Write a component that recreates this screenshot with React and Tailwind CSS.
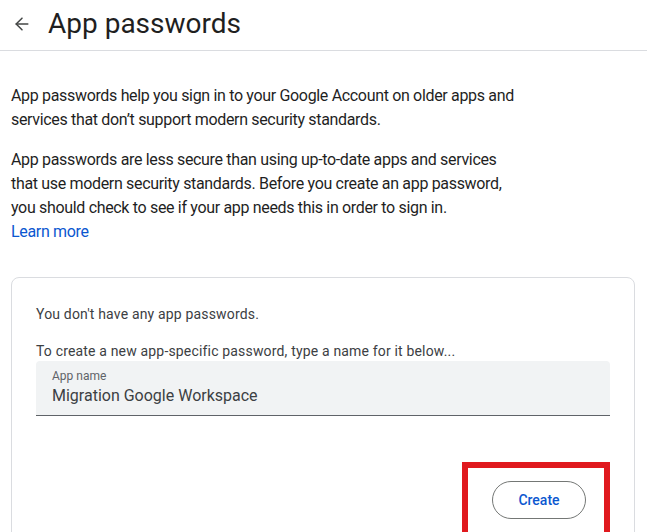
import { ArrowLeft } from 'lucide-react';

export default function App() {
  return (
    <div className="relative h-[532px] w-[647px] overflow-hidden bg-white font-['Roboto',sans-serif] text-[#1f1f1f]">
      {/* Header */}
      <div className="flex h-[51px] items-center border-b border-[#dadce0] pb-[3px]">
        <button className="ml-[10px] flex h-6 w-6 items-center justify-center text-[#444746]">
          <ArrowLeft className="h-5 w-5" strokeWidth={1.8} />
        </button>
        <h1 className="ml-[14px] text-[28px] leading-9 font-normal text-[#1f1f1f]">App passwords</h1>
      </div>

      {/* Intro */}
      <div className="px-[11px] pt-[33px] text-base leading-6 tracking-[-0.33px] text-[#1f1f1f]">
        <p>
          App passwords help you sign in to your Google Account on older apps and
          <br />
          services that don’t support modern security standards.
        </p>
        <p className="mt-4">
          App passwords are less secure than using up-to-date apps and services
          <br />
          that use modern security standards. Before you create an app password,
          <br />
          you should check to see if your app needs this in order to sign in.
        </p>
        <a href="#" className="block text-[#0b57d0]">Learn more</a>
      </div>

      {/* Card */}
      <div className="mx-[11px] mt-[33px] h-[300px] w-[624px] rounded-lg border border-[#dadce0] px-6 pt-[26px]">
        <p className="text-sm leading-5 tracking-[0.17px] text-[#3c4043]">You don't have any app passwords.</p>
        <p className="mt-[17px] text-sm leading-5 tracking-[0.17px] text-[#3c4043]">
          To create a new app-specific password, type a name for it below...
        </p>
        <div className="mt-0 h-[55px] w-[574px] rounded-t border-b border-[#5f6368] bg-[#f1f3f4] px-4 pt-[7px]">
          <div className="text-xs leading-4 text-[#5f6368]">App name</div>
          <div className="text-base leading-6 text-[#3c4043]">Migration Google Workspace</div>
        </div>
        <div className="mt-[65px] flex justify-end pr-[24px]">
          <button className="h-[38px] w-[94px] rounded-full border border-[#747775] text-sm font-medium text-[#0b57d0]">
            Create
          </button>
        </div>
      </div>

      {/* Annotation box */}
      <div className="absolute left-[462px] top-[462px] h-[80px] w-[148px] border-[6px] border-[#e0191e]" />
    </div>
  );
}
